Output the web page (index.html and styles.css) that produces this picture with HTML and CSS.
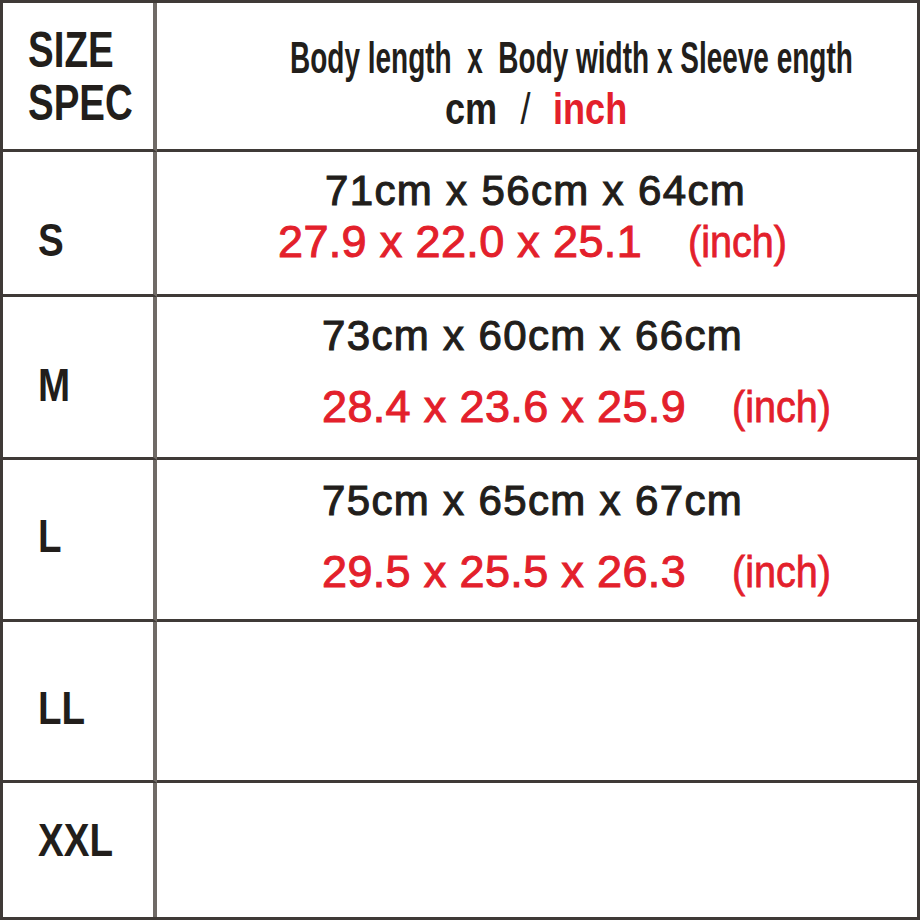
FILE: index.html
```html
<!DOCTYPE html>
<html>
<head>
<meta charset="utf-8">
<link rel="stylesheet" href="styles.css">
</head>
<body>
<div class="chart">
  <div class="label row-head"><span class="cond big">SIZE<br>SPEC</span></div>
  <div class="value row-head">
    <div class="line hd1"><span class="cond hdr">Body length&nbsp;&nbsp;x&nbsp;&nbsp;Body width x Sleeve ength</span></div>
    <div class="line hd2"><span class="cond sub">cm&nbsp;&nbsp;<span class="slash">/</span>&nbsp;&nbsp;<em class="red">inch</em></span></div>
  </div>

  <div class="label row-s"><span class="cond lab">S</span></div>
  <div class="value row-s">
    <div class="line cm s-cm">71cm x 56cm x 64cm</div>
    <div class="line inch s-inch">27.9 x 22.0 x 25.1<span class="unit">(inch)</span></div>
  </div>

  <div class="label row-m"><span class="cond lab">M</span></div>
  <div class="value row-m">
    <div class="line cm">73cm x 60cm x 66cm</div>
    <div class="line inch wide">28.4 x 23.6 x 25.9<span class="unit">(inch)</span></div>
  </div>

  <div class="label row-l"><span class="cond lab">L</span></div>
  <div class="value row-l">
    <div class="line cm">75cm x 65cm x 67cm</div>
    <div class="line inch wide">29.5 x 25.5 x 26.3<span class="unit">(inch)</span></div>
  </div>

  <div class="label row-ll"><span class="cond lab">LL</span></div>
  <div class="value row-ll"></div>

  <div class="label row-xxl last"><span class="cond lab">XXL</span></div>
  <div class="value row-xxl last"></div>
</div>
</body>
</html>
```
FILE: styles.css
```css
html, body {
  margin: 0;
  padding: 0;
  background: #ffffff;
}

.chart {
  width: 920px;
  height: 920px;
  box-sizing: border-box;
  border: 3px solid #3f3a37;
  display: grid;
  grid-template-columns: 154px 760px;
  grid-template-rows: 149px 145px 163px 162px 161px 134px;
  font-family: "Liberation Sans", Arial, sans-serif;
  font-weight: bold;
  color: #221e1b;
}

.label,
.value {
  box-sizing: border-box;
  border-bottom: 3px solid #3f3a37;
  overflow: hidden;
}

.label {
  border-right: 4px solid #6f6a66;
  padding-left: 35px;
}

.last {
  border-bottom: none;
}

.cond {
  display: inline-block;
  white-space: nowrap;
  transform-origin: left center;
}

.big {
  font-size: 50px;
  line-height: 53px;
  transform: scaleX(0.77);
}

.lab {
  font-size: 47px;
  line-height: 47px;
  transform: scaleX(0.82);
}

.label.row-head { padding-left: 25px; padding-top: 21px; }
.label.row-s { padding-top: 64px; }
.label.row-m { padding-top: 64px; }
.label.row-l { padding-top: 52px; }
.label.row-ll { padding-top: 62px; }
.label.row-xxl { padding-top: 33px; }

.value {
  display: flex;
  flex-direction: column;
  align-items: flex-start;
}

.line {
  white-space: nowrap;
}

.hdr {
  font-size: 44px;
  line-height: 44px;
  transform: scaleX(0.636);
}

.sub {
  font-size: 44px;
  line-height: 44px;
  transform: scaleX(0.82);
}

.slash {
  font-weight: normal;
  padding: 0 3px 0 4px;
}

.red {
  font-style: normal;
  color: #e3202b;
}

.value.row-head { padding-top: 33px; }
.hd1 { margin-left: 133px; }
.hd2 { margin-left: 288px; margin-top: 7px; }

.cm {
  font-size: 42px;
  line-height: 42px;
  margin-left: 165px;
  font-weight: normal;
  -webkit-text-stroke: 1.1px #221e1b;
  letter-spacing: 1.35px;
}

.inch {
  font-size: 45px;
  line-height: 45px;
  color: #e3202b;
  margin-left: 121px;
  margin-top: 27px;
  font-weight: normal;
  -webkit-text-stroke: 1px #e3202b;
  letter-spacing: 0.35px;
}

.inch.wide { margin-left: 165px; }

.s-cm { margin-left: 168px; }
.s-inch { margin-top: 7px; }

.unit {
  display: inline-block;
  margin-left: 46px;
  letter-spacing: 0;
  transform: scaleX(0.88);
  transform-origin: left center;
  font-weight: normal;
  -webkit-text-stroke: 0.8px #e3202b;
}

.value.row-s { padding-top: 18px; }
.value.row-m { padding-top: 18px; }
.value.row-l { padding-top: 20px; }
```
